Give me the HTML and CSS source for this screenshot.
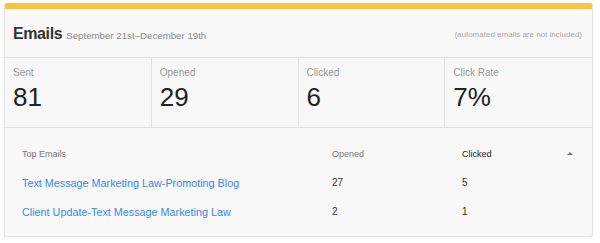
FILE: index.html
```html
<!DOCTYPE html>
<html lang="en">
<head>
  <meta charset="UTF-8">
  <meta name="viewport" content="width=device-width, initial-scale=1.0">
  <title>Emails</title>
  <link rel="stylesheet" href="styles.css">
</head>
<body>
  <div class="card">
    <div class="card-head">
      <h2 class="title">Emails <span class="range">September 21st–December 19th</span></h2>
      <div class="note">(automated emails are not included)</div>
    </div>
    <div class="stats">
      <div class="stat">
        <div class="stat-label">Sent</div>
        <div class="stat-value">81</div>
      </div>
      <div class="stat">
        <div class="stat-label">Opened</div>
        <div class="stat-value">29</div>
      </div>
      <div class="stat">
        <div class="stat-label">Clicked</div>
        <div class="stat-value">6</div>
      </div>
      <div class="stat">
        <div class="stat-label">Click Rate</div>
        <div class="stat-value">7%</div>
      </div>
    </div>
    <div class="top">
      <div class="row row-head">
        <div class="col-name">Top Emails</div>
        <div class="col-num">Opened</div>
        <div class="col-num sorted">Clicked <span class="caret"></span></div>
      </div>
      <div class="row">
        <div class="col-name"><a href="#">Text Message Marketing Law-Promoting Blog</a></div>
        <div class="col-num">27</div>
        <div class="col-num">5</div>
      </div>
      <div class="row">
        <div class="col-name"><a href="#">Client Update-Text Message Marketing Law</a></div>
        <div class="col-num">2</div>
        <div class="col-num">1</div>
      </div>
    </div>
  </div>
</body>
</html>
```

FILE: styles.css
```css
html {
  box-sizing: border-box;
}
*, *:before, *:after {
  box-sizing: inherit;
}
body {
  margin: 0;
  padding: 3px 7px 0 4px;
  background: #fff;
  color: #333;
  font-family: "Liberation Sans", Arial, sans-serif;
  -webkit-font-smoothing: antialiased;
}

.card {
  background: #f8f8f8;
  border: 1px solid #e2e2e2;
  border-top: 6px solid #f8c443;
  border-radius: 3px;
  box-shadow: 0 1px 1px rgba(0, 0, 0, 0.12);
  height: 234px;
}

.card-head {
  display: flex;
  justify-content: space-between;
  align-items: center;
  height: 49px;
  padding: 2px 10px 0 8px;
  border-bottom: 1px solid #e2e2e2;
}

.title {
  margin: 0;
  font-size: 16px;
  font-weight: bold;
  letter-spacing: -0.4px;
  color: #333;
}

.range {
  font-size: 9.7px;
  font-weight: normal;
  letter-spacing: 0;
  color: #8a8a8a;
}

.note {
  font-size: 8px;
  color: #aaa;
}

.stats {
  display: grid;
  grid-template-columns: repeat(4, 1fr);
  border-bottom: 1px solid #e2e2e2;
  height: 70px;
}

.stat {
  padding: 9px 8px 0;
  border-right: 1px solid #e2e2e2;
}
.stat:last-child {
  border-right: none;
}

.stat-label {
  font-size: 10px;
  color: #999;
}

.stat-value {
  font-size: 26px;
  color: #222;
  margin-top: 4px;
}

.top {
  padding: 11px 17px 0 17px;
}

.row {
  display: grid;
  grid-template-columns: 310px 130px 1fr;
  align-items: center;
  height: 29px;
  font-size: 10px;
  color: #333;
}

.row-head {
  color: #777;
  font-size: 9px;
}

.sorted {
  color: #222;
  display: flex;
  justify-content: space-between;
  align-items: center;
}

.caret {
  width: 0;
  height: 0;
  border-left: 3px solid transparent;
  border-right: 3px solid transparent;
  border-bottom: 3px solid #777;
  margin-right: 2px;
}

a {
  color: #3a87e0;
  text-decoration: none;
  font-size: 10.8px;
}
a:hover {
  text-decoration: underline;
}
```
